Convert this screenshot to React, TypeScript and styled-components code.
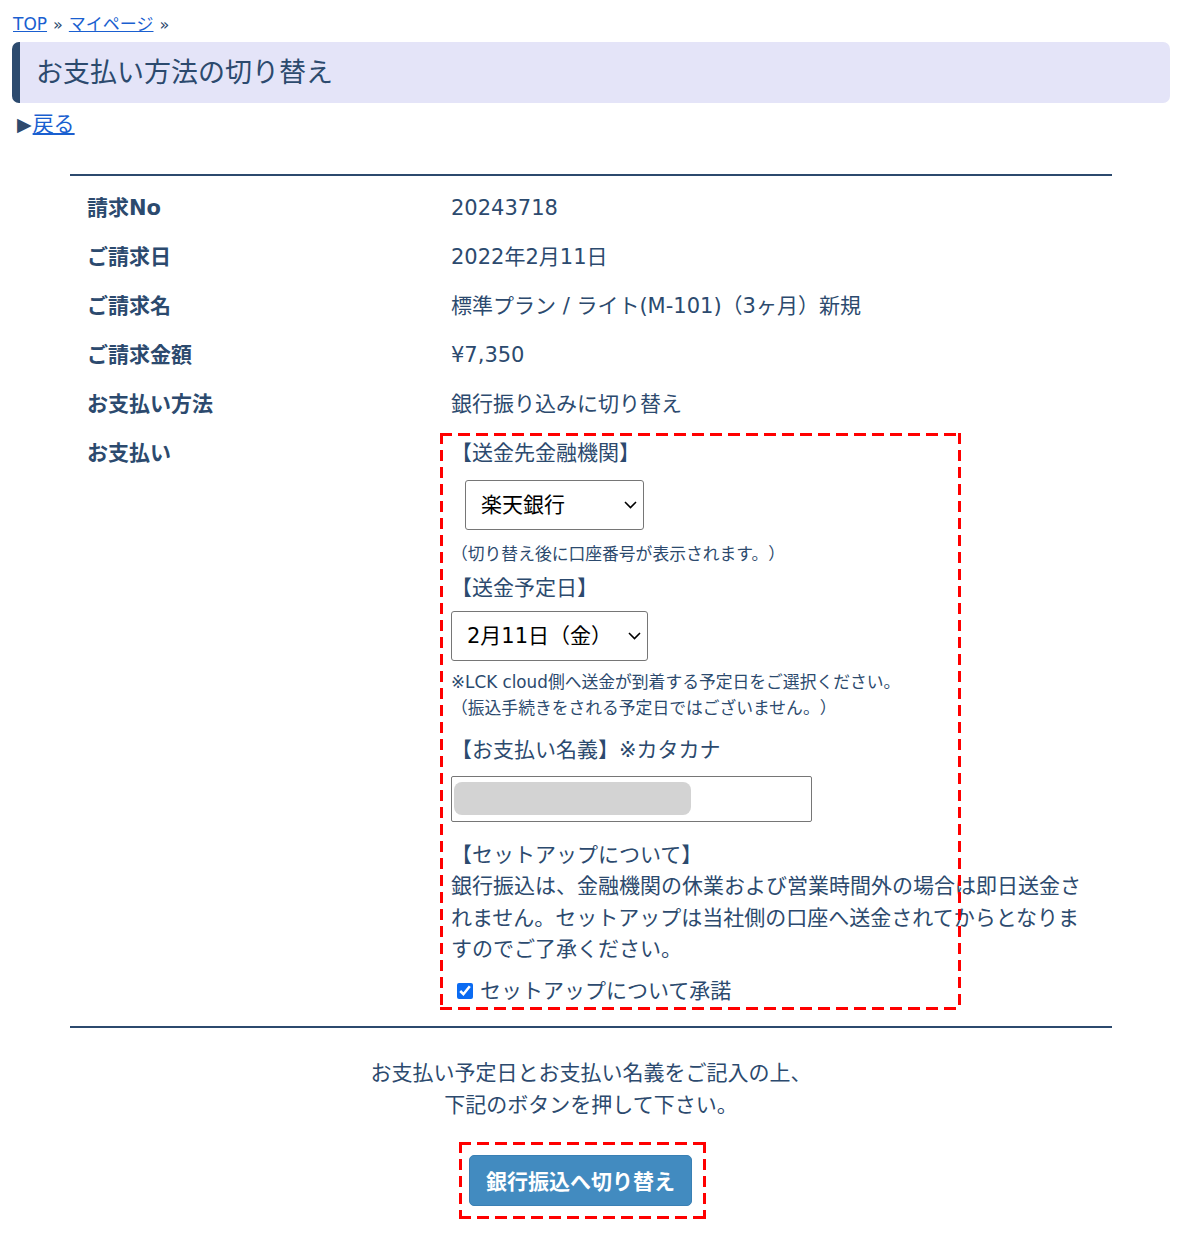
import React from 'react'
import styled, { createGlobalStyle } from 'styled-components'

const navy = '#2c4a6e'
const link = '#1a5fd0'

const GlobalStyle = createGlobalStyle`
  body {
    margin: 0;
    background: #fff;
    color: ${navy};
    font-family: "DejaVu Sans", "Noto Sans CJK JP", sans-serif;
    text-spacing-trim: space-all;
  }
`

const Page = styled.div`
  padding: 12px 13px 20px 12px;
`

const Breadcrumb = styled.nav`
  padding-left: 1px;
  font-size: 17px;
  line-height: 25px;
`

const Crumb = styled.a`
  color: ${link};
  text-decoration: underline;
`

const Sep = styled.span`
  margin: 0 6px;
  font-size: 16px;
`

const PageTitle = styled.h1`
  margin: 5px 0 0;
  height: 61px;
  padding: 0 16px;
  background: #e4e4f8;
  border-left: 8px solid ${navy};
  border-radius: 7px;
  font-size: 27px;
  font-weight: normal;
  line-height: 61px;
`

const BackLine = styled.div`
  margin-top: 6px;
  padding-left: 5px;
  font-size: 21px;
  line-height: 31px;
  display: flex;
  align-items: center;
`

const Arrow = styled.span`
  font-size: 19px;
  margin-right: 1px;
`

const BackLink = styled.a`
  color: ${link};
  text-decoration: underline;
`

const Section = styled.section`
  margin: 34px 58px 0;
  padding: 8px 0 10px;
  border-top: 2px solid ${navy};
  border-bottom: 2px solid ${navy};
`

const DetailGrid = styled.div`
  display: grid;
  grid-template-columns: 365px 1fr;
  font-size: 21px;
  line-height: 31px;
`

const Label = styled.div`
  padding: 9px 17px;
  font-weight: bold;
`

const Value = styled.div`
  padding: 9px 16px;
`

const PaymentBody = styled.div`
  position: relative;
`

// red dashed annotation frame, drawn with gradients for longer dashes
const dashes = `
  repeating-linear-gradient(90deg, #ff0000 0 12px, transparent 12px 18px) top left / 100% 3px no-repeat,
  repeating-linear-gradient(90deg, #ff0000 0 12px, transparent 12px 18px) bottom left / 100% 3px no-repeat,
  repeating-linear-gradient(180deg, #ff0000 0 11px, transparent 11px 17px) top left / 3px 100% no-repeat,
  repeating-linear-gradient(180deg, #ff0000 0 11px, transparent 11px 17px) top right / 3px 100% no-repeat
`

const Annotation = styled.div<{ $w: number; $h: number; $l: number; $t: number }>`
  position: absolute;
  left: ${({ $l }) => $l}px;
  top: ${({ $t }) => $t}px;
  width: ${({ $w }) => $w}px;
  height: ${({ $h }) => $h}px;
  background: ${dashes};
  pointer-events: none;
`

const FieldLabel = styled.div<{ $mt?: number }>`
  margin-top: ${({ $mt }) => $mt ?? 0}px;
`

const Note = styled.div<{ $mt?: number }>`
  margin-top: ${({ $mt }) => $mt ?? 0}px;
  font-size: 16.8px;
  line-height: 26px;
`

const SelectWrap = styled.div<{ $w: number; $ml?: number; $mt: number }>`
  position: relative;
  width: ${({ $w }) => $w}px;
  height: 50px;
  margin-left: ${({ $ml }) => $ml ?? 0}px;
  margin-top: ${({ $mt }) => $mt}px;
`

const Select = styled.select<{ $pl: number }>`
  appearance: none;
  width: 100%;
  height: 100%;
  box-sizing: border-box;
  padding: 0 30px 0 ${({ $pl }) => $pl}px;
  border: 1px solid #767676;
  border-radius: 3px;
  background: #fff;
  color: #000;
  font-family: "DejaVu Sans", "Noto Sans CJK JP", sans-serif;
  font-size: 21px;
`

const Chevron = styled.svg`
  position: absolute;
  right: 7px;
  top: 21px;
  pointer-events: none;
`

const InputWrap = styled.div`
  position: relative;
  width: 361px;
  height: 46px;
  margin-top: 10px;
`

const TextInput = styled.input`
  width: 100%;
  height: 100%;
  box-sizing: border-box;
  border: 1px solid #767676;
  border-radius: 2px;
  font-size: 20px;
`

const Redacted = styled.div`
  position: absolute;
  left: 3px;
  top: 6px;
  width: 237px;
  height: 33px;
  border-radius: 8px;
  background: #d3d3d3;
`

const Paragraph = styled.p`
  margin: 0;
  line-height: 31.5px;
`

const AgreeLine = styled.label`
  display: flex;
  align-items: center;
  margin-top: 10px;
`

const Check = styled.input`
  width: 16px;
  height: 16px;
  margin: 0 7px 0 6px;
  accent-color: #0b6bf2;
`

const Footer = styled.div`
  margin: 0 58px;
  display: flex;
  flex-direction: column;
  align-items: center;
`

const FooterText = styled.p`
  margin: 29px 0 0;
  font-size: 21px;
  line-height: 32px;
  text-align: center;
`

const ButtonFrame = styled.div`
  margin: 21px 17px 0 0;
  padding: 13px 14px 13px 10px;
  background: ${dashes};
`

const SubmitButton = styled.button`
  display: block;
  width: 223px;
  height: 51px;
  border: 1px solid #3a80b4;
  border-radius: 5px;
  background: #428bc0;
  color: #fff;
  font-family: "DejaVu Sans", "Noto Sans CJK JP", sans-serif;
  font-size: 21px;
  font-weight: bold;
`

const SelectBox: React.FC<{ w: number; ml?: number; mt: number; pl: number; option: string }> = ({
  w,
  ml,
  mt,
  pl,
  option,
}) => (
  <SelectWrap $w={w} $ml={ml} $mt={mt}>
    <Select $pl={pl} defaultValue={option}>
      <option>{option}</option>
    </Select>
    <Chevron width="13" height="8" viewBox="0 0 13 8">
      <path d="M1 1l5.5 5.5L12 1" fill="none" stroke="#000" strokeWidth="1.6" />
    </Chevron>
  </SelectWrap>
)

const rows: [string, string][] = [
  ['請求No', '20243718'],
  ['ご請求日', '2022年2月11日'],
  ['ご請求名', '標準プラン / ライト(M-101)（3ヶ月）新規'],
  ['ご請求金額', '¥7,350'],
  ['お支払い方法', '銀行振り込みに切り替え'],
]

const App: React.FC = () => (
  <Page>
    <GlobalStyle />
    <Breadcrumb>
      <Crumb href="#">TOP</Crumb>
      <Sep>»</Sep>
      <Crumb href="#">マイページ</Crumb>
      <Sep>»</Sep>
    </Breadcrumb>
    <PageTitle>お支払い方法の切り替え</PageTitle>
    <BackLine>
      <Arrow>▶</Arrow>
      <BackLink href="#">戻る</BackLink>
    </BackLine>

    <Section>
      <DetailGrid>
        {rows.map(([label, value]) => (
          <React.Fragment key={label}>
            <Label>{label}</Label>
            <Value>{value}</Value>
          </React.Fragment>
        ))}
        <Label>お支払い</Label>
        <Value>
          <PaymentBody>
            <Annotation $l={-11} $t={-5} $w={521} $h={577} />
            <FieldLabel>【送金先金融機関】</FieldLabel>
            <SelectBox w={179} ml={14} mt={11} pl={15} option="楽天銀行" />
            <Note $mt={11}>（切り替え後に口座番号が表示されます。）</Note>
            <FieldLabel $mt={6}>【送金予定日】</FieldLabel>
            <SelectBox w={197} mt={7} pl={15} option="2月11日（金）" />
            <Note $mt={8}>
              ※LCK cloud側へ送金が到着する予定日をご選択ください。
              <br />
              （振込手続きをされる予定日ではございません。）
            </Note>
            <FieldLabel $mt={14}>【お支払い名義】※カタカナ</FieldLabel>
            <InputWrap>
              <TextInput type="text" />
              <Redacted />
            </InputWrap>
            <FieldLabel $mt={18}>【セットアップについて】</FieldLabel>
            <Paragraph>
              銀行振込は、金融機関の休業および営業時間外の場合は即日送金されません。セットアップは当社側の口座へ送金されてからとなりますのでご了承ください。
            </Paragraph>
            <AgreeLine>
              <Check type="checkbox" defaultChecked />
              セットアップについて承諾
            </AgreeLine>
          </PaymentBody>
        </Value>
      </DetailGrid>
    </Section>

    <Footer>
      <FooterText>
        お支払い予定日とお支払い名義をご記入の上、
        <br />
        下記のボタンを押して下さい。
      </FooterText>
      <ButtonFrame>
        <SubmitButton type="button">銀行振込へ切り替え</SubmitButton>
      </ButtonFrame>
    </Footer>
  </Page>
)

export default App
